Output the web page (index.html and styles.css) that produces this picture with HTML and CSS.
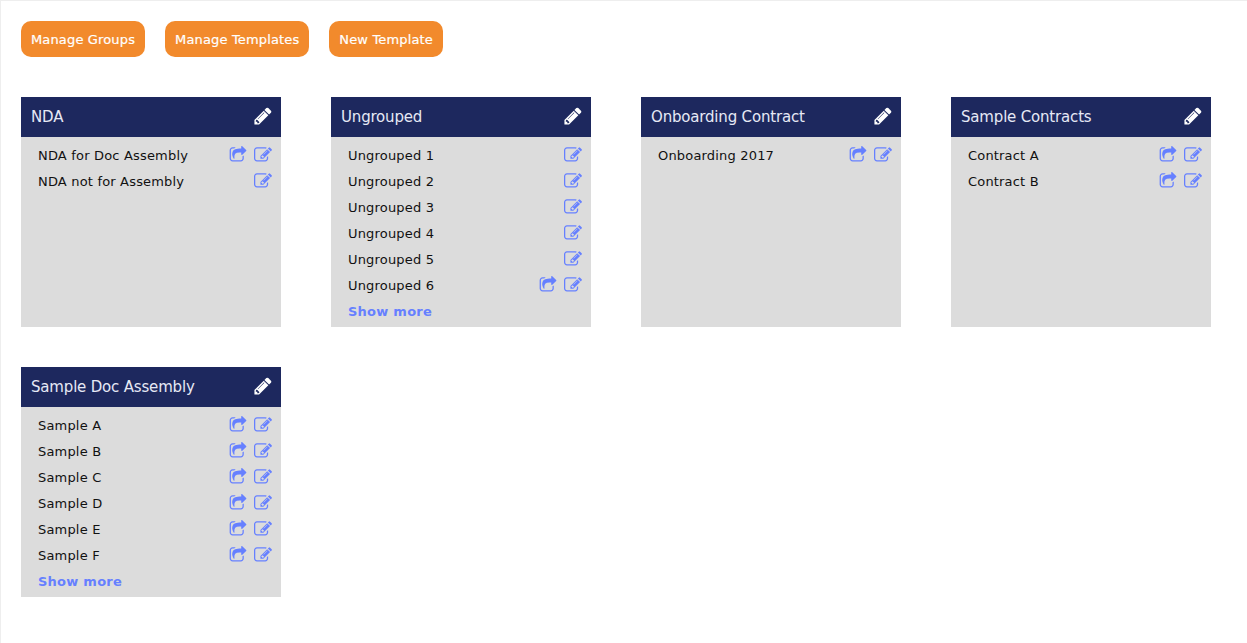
FILE: index.html
```html
<!DOCTYPE html>
<html lang="en">

<head>
    <meta charset="UTF-8">
    <meta name="viewport" content="width=device-width, initial-scale=1.0">
    <title>Templates</title>
    <link rel="stylesheet" href="styles.css">
</head>

<body>
    <!-- Icon definitions -->
    <svg class="defs" xmlns="http://www.w3.org/2000/svg">
        <symbol id="i-pencil" viewBox="0 0 1792 1792">
            <path d="M491 1536l91-91-235-235-91 91v107h128v128h107zm523-928q0-22-22-22-10 0-17 7l-542 542q-7 7-7 17 0 22 22 22 10 0 17-7l542-542q7-7 7-17zm-54-192l416 416-832 832h-416v-416zm683 96q0 53-37 90l-166 166-416-416 166-165q36-38 90-38 53 0 91 38l235 234q37 39 37 91z" />
        </symbol>
        <symbol id="i-edit" viewBox="0 0 1792 1792">
            <path d="M888 1184l116-116-152-152-116 116v56h96v96h56zm440-720q-16-16-33 1l-350 350q-17 17-1 33t33-1l350-350q17-17 1-33zm80 594v190q0 119-84.5 203.5t-203.5 84.5h-832q-119 0-203.5-84.5t-84.5-203.5v-832q0-119 84.5-203.5t203.5-84.5h832q63 0 117 25 15 7 18 23 3 17-9 29l-49 49q-14 14-32 8-23-6-45-6h-832q-66 0-113 47t-47 113v832q0 66 47 113t113 47h832q66 0 113-47t47-113v-126q0-13 9-22l64-64q15-15 35-7t20 29zm-96-738l288 288-672 672h-288v-288zm444 132l-92 92-288-288 92-92q28-28 68-28t68 28l152 152q28 28 28 68t-28 68z" />
        </symbol>
        <symbol id="i-share" viewBox="0 0 1792 1792">
            <path d="M1472 989v259q0 119-84.5 203.5t-203.5 84.5h-832q-119 0-203.5-84.5t-84.5-203.5v-832q0-119 84.5-203.5t203.5-84.5h255q13 0 22.5 9.5t9.5 22.5q0 27-26 32-77 26-133 60-10 4-16 4h-112q-66 0-113 47t-47 113v832q0 66 47 113t113 47h832q66 0 113-47t47-113v-214q0-19 18-29 28-13 54-37 16-16 35-8 21 9 21 29zm237-496l-384 384q-18 19-45 19-12 0-25-5-39-17-39-59v-192h-160q-323 0-438 131-119 137-74 473 3 23-20 34-8 2-12 2-16 0-26-13-10-14-21-31t-39.5-68.5-49.5-99.5-38.5-114-17.5-122q0-49 3.5-91t14-90 28-88 47-81.5 68.5-74 94.5-61.5 124.5-48.5 159.5-30.5 196.5-11h160v-192q0-42 39-59 13-5 25-5 26 0 45 19l384 384q19 19 19 45t-19 45z" />
        </symbol>
    </svg>

    <!-- Top buttons -->
    <div class="toolbar">
        <a class="btn">Manage Groups</a>
        <a class="btn">Manage Templates</a>
        <a class="btn">New Template</a>
    </div>

    <!-- Template groups -->
    <div class="groups">
        <section class="group">
            <header class="group-head">
                <span>NDA</span>
                <svg class="icon-pencil"><use href="#i-pencil" /></svg>
            </header>
            <ul class="items">
                <li class="item"><span class="name">NDA for Doc Assembly</span><svg class="icon"><use href="#i-share" /></svg><svg class="icon"><use href="#i-edit" /></svg></li>
                <li class="item"><span class="name">NDA not for Assembly</span><svg class="icon"><use href="#i-edit" /></svg></li>
            </ul>
        </section>

        <section class="group">
            <header class="group-head">
                <span>Ungrouped</span>
                <svg class="icon-pencil"><use href="#i-pencil" /></svg>
            </header>
            <ul class="items">
                <li class="item"><span class="name">Ungrouped 1</span><svg class="icon"><use href="#i-edit" /></svg></li>
                <li class="item"><span class="name">Ungrouped 2</span><svg class="icon"><use href="#i-edit" /></svg></li>
                <li class="item"><span class="name">Ungrouped 3</span><svg class="icon"><use href="#i-edit" /></svg></li>
                <li class="item"><span class="name">Ungrouped 4</span><svg class="icon"><use href="#i-edit" /></svg></li>
                <li class="item"><span class="name">Ungrouped 5</span><svg class="icon"><use href="#i-edit" /></svg></li>
                <li class="item"><span class="name">Ungrouped 6</span><svg class="icon"><use href="#i-share" /></svg><svg class="icon"><use href="#i-edit" /></svg></li>
                <li class="item"><a class="more">Show more</a></li>
            </ul>
        </section>

        <section class="group">
            <header class="group-head">
                <span>Onboarding Contract</span>
                <svg class="icon-pencil"><use href="#i-pencil" /></svg>
            </header>
            <ul class="items">
                <li class="item"><span class="name">Onboarding 2017</span><svg class="icon"><use href="#i-share" /></svg><svg class="icon"><use href="#i-edit" /></svg></li>
            </ul>
        </section>

        <section class="group">
            <header class="group-head">
                <span>Sample Contracts</span>
                <svg class="icon-pencil"><use href="#i-pencil" /></svg>
            </header>
            <ul class="items">
                <li class="item"><span class="name">Contract A</span><svg class="icon"><use href="#i-share" /></svg><svg class="icon"><use href="#i-edit" /></svg></li>
                <li class="item"><span class="name">Contract B</span><svg class="icon"><use href="#i-share" /></svg><svg class="icon"><use href="#i-edit" /></svg></li>
            </ul>
        </section>

        <section class="group">
            <header class="group-head">
                <span>Sample Doc Assembly</span>
                <svg class="icon-pencil"><use href="#i-pencil" /></svg>
            </header>
            <ul class="items">
                <li class="item"><span class="name">Sample A</span><svg class="icon"><use href="#i-share" /></svg><svg class="icon"><use href="#i-edit" /></svg></li>
                <li class="item"><span class="name">Sample B</span><svg class="icon"><use href="#i-share" /></svg><svg class="icon"><use href="#i-edit" /></svg></li>
                <li class="item"><span class="name">Sample C</span><svg class="icon"><use href="#i-share" /></svg><svg class="icon"><use href="#i-edit" /></svg></li>
                <li class="item"><span class="name">Sample D</span><svg class="icon"><use href="#i-share" /></svg><svg class="icon"><use href="#i-edit" /></svg></li>
                <li class="item"><span class="name">Sample E</span><svg class="icon"><use href="#i-share" /></svg><svg class="icon"><use href="#i-edit" /></svg></li>
                <li class="item"><span class="name">Sample F</span><svg class="icon"><use href="#i-share" /></svg><svg class="icon"><use href="#i-edit" /></svg></li>
                <li class="item"><a class="more">Show more</a></li>
            </ul>
        </section>
    </div>
</body>

</html>
```

FILE: styles.css
```css
html, body {
    height: 100%;
}

body {
    box-sizing: border-box;
    margin: 0;
    padding: 20px;
    border-top: 1px solid #eeeeee;
    border-left: 1px solid #eeeeee;
    background-color: #ffffff;
    font-family: "DejaVu Sans", Verdana, sans-serif;
    font-size: 13px;
    overflow: hidden;
}

.defs {
    display: none;
}

.toolbar {
    display: flex;
    gap: 20px;
    margin-bottom: 40px;
}

.btn {
    height: 36px;
    padding: 0 10px;
    display: flex;
    align-items: center;
    border-radius: 10px;
    background-color: #f28a2c;
    color: #ffffff;
    font-size: 13px;
    font-weight: 500;
    letter-spacing: 0.15px;
    -webkit-text-stroke: 0.2px #ffffff;
}

.groups {
    display: grid;
    grid-template-columns: repeat(4, 260px);
    grid-auto-rows: 230px;
    column-gap: 50px;
    row-gap: 40px;
}

.group {
    background-color: #dcdcdc;
}

.group-head {
    height: 40px;
    padding: 0 8px 0 10px;
    display: flex;
    align-items: center;
    justify-content: space-between;
    background-color: #1d285e;
    color: #e6e9f5;
    font-size: 15px;
    letter-spacing: -0.18px;
}

.icon-pencil {
    width: 20px;
    height: 20px;
    margin-top: -3px;
    fill: #ffffff;
}

.items {
    list-style: none;
    margin: 0;
    padding: 5px 9px 0 17px;
}

.item {
    height: 26px;
    display: flex;
    align-items: center;
    gap: 7px;
    color: #111111;
    letter-spacing: 0.18px;
}

.name {
    flex: 1;
}

.icon {
    width: 18px;
    height: 18px;
    fill: #6680ff;
}

.more {
    color: #6680ff;
    font-weight: bold;
    letter-spacing: 0.25px;
}
```
